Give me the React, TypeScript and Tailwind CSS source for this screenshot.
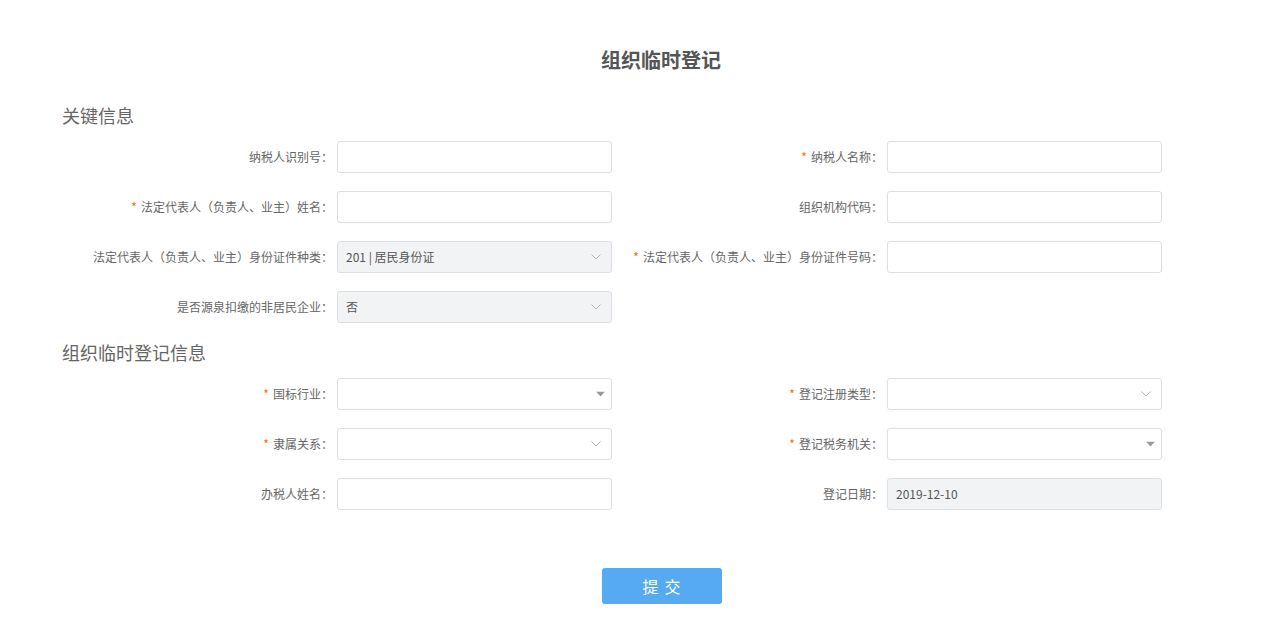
import React from "react";

type Field = {
  label: string;
  required?: boolean;
  kind: "input" | "select" | "tri" | "disabled-select" | "disabled";
  value?: string;
};

function Chevron() {
  return (
    <svg width="10" height="6" viewBox="0 0 10 6" className="absolute right-[10px] top-1/2 -translate-y-1/2">
      <path d="M0.5 0.5 L5 5 L9.5 0.5" fill="none" stroke="#b4b4b4" strokeWidth="1" />
    </svg>
  );
}

function Tri() {
  return (
    <svg width="9" height="5" viewBox="0 0 9 5" className="absolute right-[6px] top-1/2 -translate-y-1/2">
      <path d="M0 0 L9 0 L4.5 5 Z" fill="#999999" />
    </svg>
  );
}

function Control({ f }: { f: Field }) {
  const disabled = f.kind === "disabled" || f.kind === "disabled-select";
  return (
    <div
      className={`relative w-[275px] h-[32px] rounded-[3px] border border-[#dcdfe6] flex items-center px-[8px] text-[12px] text-[#555] ${
        disabled ? "bg-[#f2f3f5]" : "bg-white"
      }`}
    >
      {f.value && <span>{f.value}</span>}
      {(f.kind === "select" || f.kind === "disabled-select") && <Chevron />}
      {f.kind === "tri" && <Tri />}
    </div>
  );
}

function Cell({ f }: { f?: Field }) {
  if (!f) return <div className="w-[550px]" />;
  return (
    <div className="w-[550px] flex items-center">
      <div className="w-[275px] pr-[4px] text-right text-[12px] text-[#666] whitespace-nowrap">
        {f.required && <span className="text-[#ff6a00] mr-[4px]">*</span>}
        {f.label}：
      </div>
      <Control f={f} />
    </div>
  );
}

const sec1: [Field, Field | undefined][] = [
  [
    { label: "纳税人识别号", kind: "input" },
    { label: "纳税人名称", required: true, kind: "input" },
  ],
  [
    { label: "法定代表人（负责人、业主）姓名", required: true, kind: "input" },
    { label: "组织机构代码", kind: "input" },
  ],
  [
    { label: "法定代表人（负责人、业主）身份证件种类", kind: "disabled-select", value: "201 | 居民身份证" },
    { label: "法定代表人（负责人、业主）身份证件号码", required: true, kind: "input" },
  ],
  [{ label: "是否源泉扣缴的非居民企业", kind: "disabled-select", value: "否" }, undefined],
];

const sec2: [Field, Field | undefined][] = [
  [
    { label: "国标行业", required: true, kind: "tri" },
    { label: "登记注册类型", required: true, kind: "select" },
  ],
  [
    { label: "隶属关系", required: true, kind: "select" },
    { label: "登记税务机关", required: true, kind: "tri" },
  ],
  [
    { label: "办税人姓名", kind: "input" },
    { label: "登记日期", kind: "disabled", value: "2019-12-10" },
  ],
];

function Rows({ rows }: { rows: [Field, Field | undefined][] }) {
  return (
    <div className="flex flex-col gap-[18px]">
      {rows.map((r, i) => (
        <div key={i} className="flex">
          <Cell f={r[0]} />
          <Cell f={r[1]} />
        </div>
      ))}
    </div>
  );
}

export default function App() {
  return (
    <div
      className="w-[1286px] h-[641px] bg-white"
      style={{ fontFamily: '"Noto Sans CJK SC", "Liberation Sans", sans-serif' }}
    >
      <div className="pt-[44px] pl-[36px] text-center text-[20px] font-bold text-[#555] leading-[32px]">
        组织临时登记
      </div>
      <div className="pl-[62px]">
        <div className="mt-[27px] h-[24px] text-[18px] leading-[24px] text-[#666]">关键信息</div>
        <div className="mt-[14px]">
          <Rows rows={sec1} />
        </div>
        <div className="mt-[17px] h-[24px] text-[18px] leading-[24px] text-[#666]">组织临时登记信息</div>
        <div className="mt-[14px]">
          <Rows rows={sec2} />
        </div>
      </div>
      <div className="mt-[58px] pl-[37px] flex justify-center">
        <button className="w-[120px] h-[36px] rounded-[3px] bg-[#55aaf2] text-white text-[16px] tracking-[6px] pl-[6px]">
          提交
        </button>
      </div>
    </div>
  );
}
